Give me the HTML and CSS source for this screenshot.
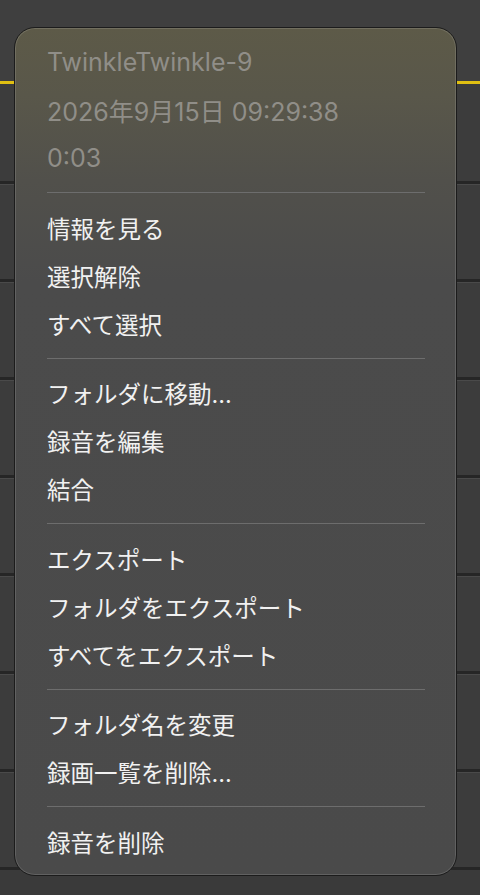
FILE: index.html
```html
<!DOCTYPE html>
<html lang="ja">
<head>
<meta charset="utf-8">
<title>Context menu</title>
<link rel="stylesheet" href="styles.css">
</head>
<body>
<div class="backdrop">
  <div class="bg-top"></div>
  <div class="bg-accent"></div>
  <div class="bg-row first"></div>
  <div class="bg-row"></div>
  <div class="bg-row"></div>
  <div class="bg-row"></div>
  <div class="bg-row"></div>
  <div class="bg-row"></div>
  <div class="bg-row"></div>
  <div class="bg-row"></div>
</div>

<div class="menu">
  <div class="section header">
    <div class="row meta">TwinkleTwinkle-9</div>
    <div class="row meta">2026年9月15日 09:29:38</div>
    <div class="row meta">0:03</div>
  </div>
  <div class="sep"></div>
  <div class="section">
    <div class="row">情報を見る</div>
    <div class="row">選択解除</div>
    <div class="row">すべて選択</div>
  </div>
  <div class="sep"></div>
  <div class="section">
    <div class="row">フォルダに移動...</div>
    <div class="row">録音を編集</div>
    <div class="row">結合</div>
  </div>
  <div class="sep"></div>
  <div class="section">
    <div class="row">エクスポート</div>
    <div class="row">フォルダをエクスポート</div>
    <div class="row">すべてをエクスポート</div>
  </div>
  <div class="sep"></div>
  <div class="section">
    <div class="row">フォルダ名を変更</div>
    <div class="row">録画一覧を削除...</div>
  </div>
  <div class="sep"></div>
  <div class="section">
    <div class="row">録音を削除</div>
  </div>
</div>
</body>
</html>
```

FILE: styles.css
```css
html, body {
  margin: 0;
  padding: 0;
}
body {
  width: 480px;
  height: 895px;
  overflow: hidden;
  background: #3a3a3a;
  position: relative;
  font-family: "Inter", "Noto Sans CJK JP", sans-serif;
}

.backdrop {
  display: flex;
  flex-direction: column;
}
.bg-top {
  height: 81px;
  background: #3f3f3f;
}
.bg-accent {
  height: 3px;
  background: #e0bf12;
}
.bg-row {
  height: 95px;
  background: #3c3c3c;
  border-bottom: 3px solid #262626;
  box-shadow: inset 0 1px 0 #4a4a4a;
}
.bg-row.first {
  height: 97px;
  box-shadow: none;
}

.menu {
  position: absolute;
  left: 14px;
  top: 27px;
  width: 443px;
  height: 849px;
  box-sizing: border-box;
  padding: 10px 31px 9px 32px;
  border-radius: 21px;
  border: 1px solid #1c1c1c;
  box-shadow: inset 0 0 0 1px rgba(255, 255, 255, 0.13);
  background: linear-gradient(180deg, #5d5a48 0%, #59574a 8%, #51504b 18%, #4b4b4b 30%, #4a4a4a 100%);
  display: flex;
  flex-direction: column;
}

.section {
  display: flex;
  flex-direction: column;
}

.row {
  height: 48px;
  display: flex;
  align-items: center;
  font-size: 23.5px;
  color: #f1f1f1;
  white-space: nowrap;
}
.row.meta {
  color: #908e88;
  font-size: 25px;
}

.sep {
  height: 1px;
  background: #6d6d6d;
  margin: 10px 0 11px;
}
```
